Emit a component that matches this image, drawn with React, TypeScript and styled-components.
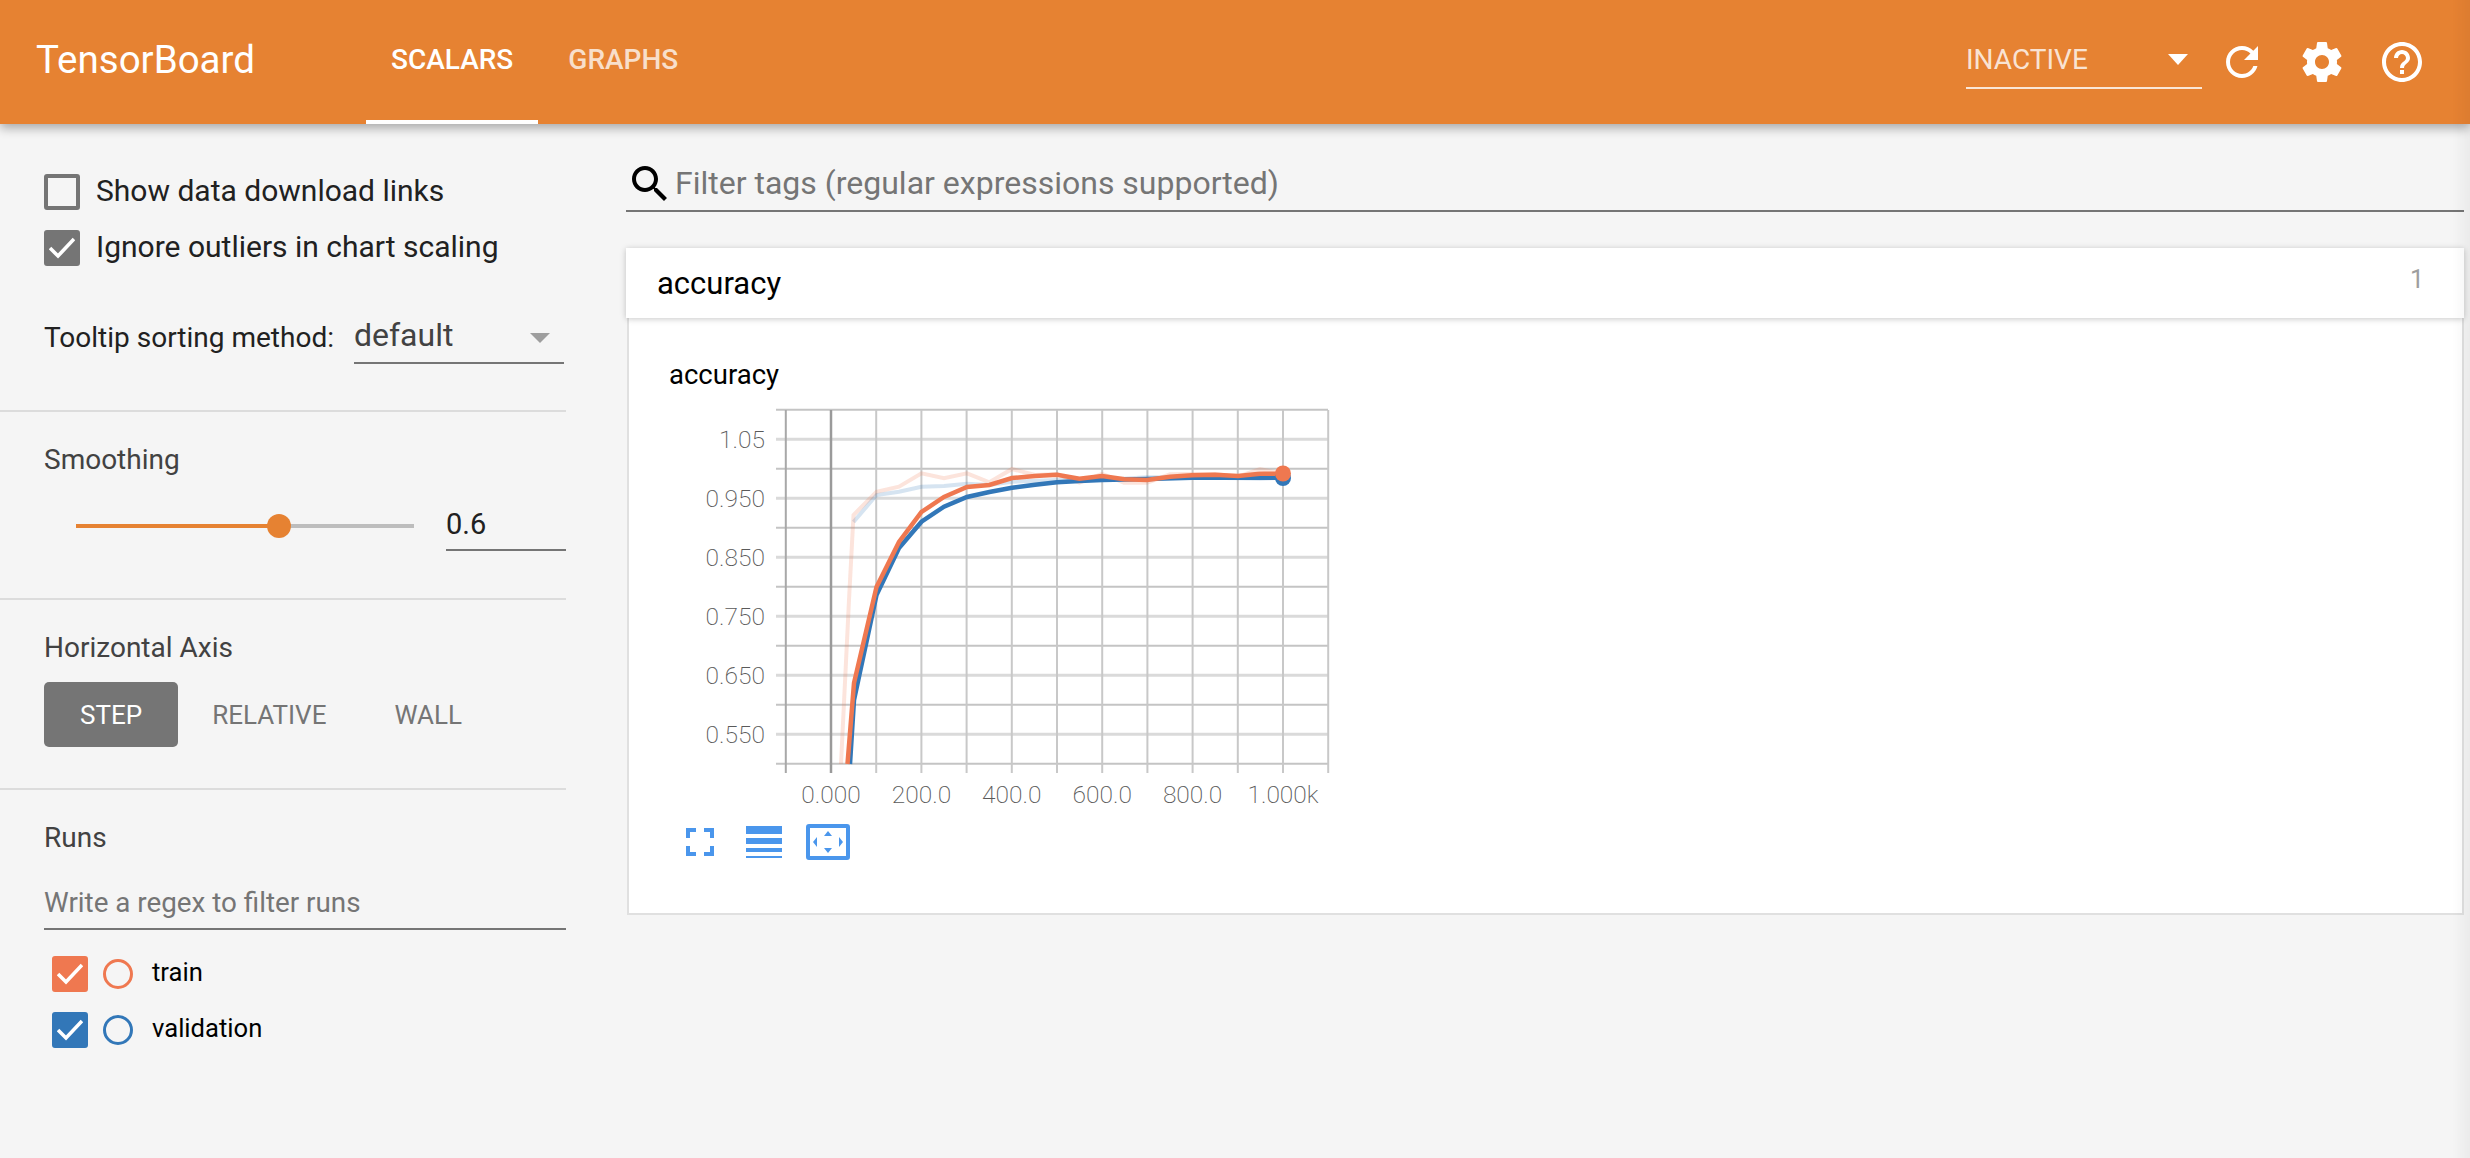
import React from "react";
import styled, { createGlobalStyle } from "styled-components";

const GlobalStyle = createGlobalStyle`
	html, body {
		margin: 0;
		padding: 0;
		background: #f5f5f5;
		font-family: Roboto, "Liberation Sans", sans-serif;
		color: #212121;
	}
	body::after {
		content: "";
		position: fixed;
		top: 0;
		right: 0;
		bottom: 0;
		width: 18px;
		background: linear-gradient(to right, rgba(0, 0, 0, 0), rgba(0, 0, 0, 0.04));
		z-index: 5;
		pointer-events: none;
	}
`;

const Page = styled.div`
	width: 2470px;
	height: 1158px;
	overflow: hidden;
	display: flex;
	flex-direction: column;
`;

const TopBar = styled.header`
	height: 124px;
	flex: none;
	display: flex;
	align-items: stretch;
	background: #e68232;
	color: #fff;
	box-shadow: 0 4px 10px rgba(0, 0, 0, 0.32);
	position: relative;
	z-index: 2;
`;

const Brand = styled.div`
	width: 366px;
	padding-left: 36px;
	box-sizing: border-box;
	font-size: 38.5px;
	line-height: 120px;
`;

const Tab = styled.div<{ $active?: boolean }>`
	padding: 0 25px;
	margin-left: ${(p) => (p.$active ? 0 : 5)}px;
	font-size: 28px;
	font-weight: 500;
	line-height: 120px;
	height: 124px;
	box-sizing: border-box;
	border-bottom: 4px solid ${(p) => (p.$active ? "#fff" : "transparent")};
	opacity: ${(p) => (p.$active ? 1 : 0.75)};
`;

const BarRight = styled.div`
	margin-left: auto;
	display: flex;
	align-items: center;
	padding-right: 28px;
`;

const RunState = styled.div`
	width: 236px;
	height: 60px;
	margin-bottom: 6px;
	box-sizing: border-box;
	border-bottom: 2px solid rgba(255, 255, 255, 0.8);
	display: flex;
	align-items: center;
	justify-content: space-between;
	padding: 2px 14px 0 0;
	font-size: 28px;
	color: rgba(255, 255, 255, 0.8);
`;

const HeaderCaret = styled.span`
	width: 0;
	height: 0;
	border-left: 10px solid transparent;
	border-right: 10px solid transparent;
	border-top: 11px solid #fff;
`;

const IconButton = styled.div`
	width: 80px;
	height: 48px;
	display: flex;
	justify-content: center;
	svg {
		width: 48px;
		height: 48px;
		fill: #fff;
	}
`;

const Body = styled.div`
	flex: 1;
	display: flex;
	min-height: 0;
`;

const Sidebar = styled.aside`
	width: 566px;
	flex: none;
`;

const Section = styled.section<{ $pad?: number; $bottom?: number; $plain?: boolean }>`
	padding: ${(p) => p.$pad ?? 30}px 0 ${(p) => p.$bottom ?? 47}px 44px;
	border-bottom: ${(p) => (p.$plain ? "none" : "2px solid #dcdcdc")};
`;

const CheckRow = styled.label`
	display: flex;
	align-items: center;
	gap: 16px;
	height: 36px;
	margin-bottom: 20px;
	font-size: 30px;
	color: #212121;
`;

const CheckText = styled.span`
	margin-bottom: 3px;
`;

const Box = styled.span<{ $on?: boolean; $color?: string; $size?: number }>`
	width: ${(p) => p.$size ?? 36}px;
	height: ${(p) => p.$size ?? 36}px;
	box-sizing: border-box;
	border-radius: 3px;
	flex: none;
	display: flex;
	align-items: center;
	justify-content: center;
	border: 4px solid ${(p) => p.$color ?? "#757575"};
	background: ${(p) => (p.$on ? p.$color ?? "#757575" : "transparent")};
	svg {
		width: 26px;
		height: 26px;
		fill: none;
		stroke: #fff;
		stroke-width: 3.6;
	}
`;

const SortRow = styled.div`
	display: flex;
	align-items: flex-end;
	gap: 20px;
	margin-top: 50px;
`;

const SortLabel = styled.span`
	font-size: 28px;
	line-height: 32px;
	margin-bottom: 10px;
	color: #212121;
`;

const SortSelect = styled.div`
	width: 210px;
	height: 48px;
	box-sizing: border-box;
	border-bottom: 2px solid #757575;
	display: flex;
	align-items: center;
	justify-content: space-between;
	padding: 0 14px 8px 0;
	font-size: 32px;
	color: #424242;
`;

const SortCaret = styled.span`
	width: 0;
	height: 0;
	margin-top: 6px;
	border-left: 10px solid transparent;
	border-right: 10px solid transparent;
	border-top: 10px solid #9e9e9e;
`;

const SectionTitle = styled.div`
	font-size: 28px;
	line-height: 32px;
	padding-top: 2px;
	color: #424242;
`;

const SliderRow = styled.div`
	display: flex;
	align-items: center;
	gap: 32px;
	height: 52px;
	margin-top: 23px;
	padding-left: 32px;
`;

const Track = styled.div`
	width: 338px;
	height: 4px;
	margin-top: 2px;
	background: #bdbdbd;
	position: relative;
`;

const TrackFill = styled.div`
	height: 100%;
	background: #e68232;
`;

const Thumb = styled.div`
	position: absolute;
	top: -10px;
	width: 24px;
	height: 24px;
	margin-left: -12px;
	border-radius: 50%;
	background: #e68232;
`;

const ValueBox = styled.div`
	width: 120px;
	height: 52px;
	box-sizing: border-box;
	border-bottom: 2px solid #757575;
	font-size: 29px;
	line-height: 50px;
	color: #212121;
`;

const AxisButtons = styled.div`
	display: flex;
	margin-top: 18px;
`;

const AxisButton = styled.div<{ $active?: boolean }>`
	height: 65px;
	padding: 0 ${(p) => (p.$active ? 36 : 34)}px;
	border-radius: 5px;
	font-size: 26px;
	line-height: 67px;
	background: ${(p) => (p.$active ? "#757575" : "transparent")};
	color: ${(p) => (p.$active ? "#fff" : "#757575")};
`;

const RunFilter = styled.div`
	height: 50px;
	margin-top: 26px;
	box-sizing: border-box;
	border-bottom: 2px solid #757575;
	font-size: 27.8px;
	line-height: 46px;
	color: #757575;
`;

const RunList = styled.div`
	margin-top: 26px;
`;

const RunRow = styled.div`
	display: flex;
	align-items: center;
	height: 36px;
	padding-left: 8px;
	margin-bottom: 20px;
	font-size: 25.6px;
	color: #000;
`;

const RunName = styled.span`
	margin-bottom: 5px;
`;

const RunRadio = styled.span<{ $color: string }>`
	width: 30px;
	height: 30px;
	box-sizing: border-box;
	border-radius: 50%;
	border: 3px solid ${(p) => p.$color};
	margin: 0 19px 0 15px;
	flex: none;
`;

const Main = styled.main`
	flex: 1;
	min-width: 0;
	padding: 36px 6px 0 60px;
`;

const SearchRow = styled.div`
	height: 52px;
	box-sizing: border-box;
	border-bottom: 2px solid #757575;
	display: flex;
	gap: 1px;
	font-size: 32px;
	line-height: 46px;
	color: #757575;
	svg {
		width: 48px;
		height: 48px;
		fill: #000;
	}
`;

const CardHeader = styled.div`
	height: 70px;
	margin-top: 36px;
	padding: 0 40px 0 31px;
	background: #fff;
	box-shadow: 0 1px 6px rgba(0, 0, 0, 0.22);
	display: flex;
	justify-content: space-between;
	position: relative;
	font-size: 31px;
	line-height: 72px;
	color: #000;
`;

const CardCount = styled.span`
	font-size: 25px;
	line-height: 64px;
	color: #9e9e9e;
`;

const CardBody = styled.div`
	height: 597px;
	box-sizing: border-box;
	margin-left: 1px;
	padding: 40px 0 0 40px;
	background: #fff;
	border: 2px solid #e0e0e0;
	border-top: none;
`;

const ChartTitle = styled.div`
	font-size: 27.5px;
	line-height: 34px;
	color: #000;
`;

const ChartSvg = styled.svg`
	display: block;
	margin-top: 8px;
	text {
		font-family: Roboto, sans-serif;
		font-weight: 200;
		font-size: 24.5px;
		fill: #5a5a5a;
	}
`;

const ChartTools = styled.div`
	display: flex;
	align-items: center;
	margin-top: 6px;
	height: 40px;
	padding-left: 7px;
	svg {
		display: block;
		fill: #4a96ec;
	}
`;

const CheckMark = () => (
	<svg viewBox="0 0 26 26">
		<path d="M1 13l8 8 16-17" />
	</svg>
);

const xAt = (step: number) => 831 + 0.452 * step;
const yAt = (v: number) => 734.3 - 590 * (v - 0.55);

const toPoints = (pts: number[][]) => pts.map((p) => p.join(",")).join(" ");

const trainSmooth = [
	[847.5, 764], [854, 683], [876.5, 587], [899, 542], [921.5, 512], [944, 497], [967, 487],
	[989.4, 485], [1012, 478], [1035, 476], [1057, 474.7], [1079.4, 478.7], [1102, 476],
	[1124.4, 479.3], [1147, 480], [1170, 476.7], [1192, 475.3], [1215, 474.7], [1238, 476],
	[1260, 473.7], [1283, 473.7],
];
const valSmooth = [
	[850, 764], [854, 700], [876.5, 595], [899, 548], [921.5, 521.7], [944, 506.7], [967, 497],
	[989.4, 492], [1012, 487.7], [1035, 484.7], [1057, 482.3], [1079.4, 481], [1102, 480],
	[1147, 479], [1192, 477.7], [1283, 477.7],
];
const trainRaw = [
	[841, 764], [849, 600], [853.5, 515], [876.5, 491.7], [899, 486.7], [921.5, 473.3], [944, 478.3],
	[967, 473.3], [989.4, 482.3], [1012, 469], [1035, 475], [1057, 474], [1079.4, 482.7], [1102, 474],
	[1124, 482.7], [1147, 482.7], [1170, 474.3], [1192, 474], [1215, 474], [1238, 476.7], [1260, 469],
	[1283, 473.7],
];
const valRaw = [
	[853.5, 522], [876.5, 495], [899, 491.7], [921.5, 486.7], [944, 486],
	[967, 483.7], [989, 485], [1012, 481.7], [1057, 480], [1102, 480], [1147, 477.3], [1192, 477.3],
	[1260, 478.7], [1283, 477.7],
];

const yTicks = [1.1, 1.05, 1.0, 0.95, 0.9, 0.85, 0.8, 0.75, 0.7, 0.65, 0.6, 0.55, 0.5];
const xSteps = [-100, 0, 100, 200, 300, 400, 500, 600, 700, 800, 900, 1000, 1100];
const yLabels = ["1.05", "0.950", "0.850", "0.750", "0.650", "0.550"];
const yLabelValues = [1.05, 0.95, 0.85, 0.75, 0.65, 0.55];
const xLabels = ["0.000", "200.0", "400.0", "600.0", "800.0", "1.000k"];

const Chart = () => (
	<ChartSvg width={680} height={416} viewBox="669 400 680 416">
		{yTicks.map((v, i) => (
			<line
				key={v}
				x1={776}
				x2={1328}
				y1={yAt(v)}
				y2={yAt(v)}
				stroke={i % 2 === 1 ? "#dadada" : "#c4c4c4"}
				strokeWidth={i % 2 === 1 ? 3 : 2}
			/>
		))}
		{xSteps.map((s) => (
			<line
				key={s}
				x1={xAt(s)}
				x2={xAt(s)}
				y1={410}
				y2={773}
				stroke={s === 0 ? "#9a9a9a" : s === -100 ? "#a8a8a8" : "#c8c8c8"}
				strokeWidth={s === 0 ? 2.5 : 2}
			/>
		))}
		<polyline points={toPoints(valRaw)} fill="none" stroke="#3277b8" strokeWidth={4} opacity={0.2} />
		<polyline points={toPoints(trainRaw)} fill="none" stroke="#ef7850" strokeWidth={4} opacity={0.2} />
		<polyline points={toPoints(valSmooth)} fill="none" stroke="#3277b8" strokeWidth={4.5} />
		<polyline points={toPoints(trainSmooth)} fill="none" stroke="#ef7850" strokeWidth={4.5} />
		<circle cx={1283} cy={478} r={8} fill="#3277b8" />
		<circle cx={1283} cy={473.5} r={8} fill="#ef7850" />
		{yLabels.map((t, i) => (
			<text key={t} x={765} y={yAt(yLabelValues[i]) + 8.5} textAnchor="end">
				{t}
			</text>
		))}
		{xLabels.map((t, i) => (
			<text key={t} x={xAt(i * 200)} y={803} textAnchor="middle">
				{t}
			</text>
		))}
	</ChartSvg>
);

const Sidebar_ = () => (
	<Sidebar>
		<Section $pad={50} $bottom={46}>
			<CheckRow>
				<Box />
				<CheckText>Show data download links</CheckText>
			</CheckRow>
			<CheckRow>
				<Box $on>
					<CheckMark />
				</Box>
				<CheckText>Ignore outliers in chart scaling</CheckText>
			</CheckRow>
			<SortRow>
				<SortLabel>Tooltip sorting method:</SortLabel>
				<SortSelect>
					default
					<SortCaret />
				</SortSelect>
			</SortRow>
		</Section>
		<Section>
			<SectionTitle>Smoothing</SectionTitle>
			<SliderRow>
				<Track>
					<TrackFill style={{ width: "60%" }} />
					<Thumb style={{ left: "60%" }} />
				</Track>
				<ValueBox>0.6</ValueBox>
			</SliderRow>
		</Section>
		<Section $bottom={41}>
			<SectionTitle>Horizontal Axis</SectionTitle>
			<AxisButtons>
				<AxisButton $active>STEP</AxisButton>
				<AxisButton>RELATIVE</AxisButton>
				<AxisButton>WALL</AxisButton>
			</AxisButtons>
		</Section>
		<Section $plain $bottom={0}>
			<SectionTitle>Runs</SectionTitle>
			<RunFilter>Write a regex to filter runs</RunFilter>
			<RunList>
				<RunRow>
					<Box $on $color="#ef7850">
						<CheckMark />
					</Box>
					<RunRadio $color="#ef7850" />
					<RunName>train</RunName>
				</RunRow>
				<RunRow>
					<Box $on $color="#3277b8">
						<CheckMark />
					</Box>
					<RunRadio $color="#3277b8" />
					<RunName>validation</RunName>
				</RunRow>
			</RunList>
		</Section>
	</Sidebar>
);

export default function App() {
	return (
		<Page>
			<GlobalStyle />
			<TopBar>
				<Brand>TensorBoard</Brand>
				<Tab $active>SCALARS</Tab>
				<Tab>GRAPHS</Tab>
				<BarRight>
					<RunState>
						INACTIVE
						<HeaderCaret />
					</RunState>
					<IconButton>
						<svg viewBox="0 0 24 24">
							<path d="M17.65 6.35C16.2 4.9 14.21 4 12 4c-4.42 0-7.99 3.58-7.99 8s3.57 8 7.99 8c3.73 0 6.84-2.55 7.73-6h-2.08c-.82 2.33-3.04 4-5.65 4-3.31 0-6-2.69-6-6s2.69-6 6-6c1.66 0 3.14.69 4.22 1.78L13 11h7V4l-2.35 2.35z" />
						</svg>
					</IconButton>
					<IconButton>
						<svg viewBox="0 0 24 24">
							<path d="M19.43 12.98c.04-.32.07-.64.07-.98s-.03-.66-.07-.98l2.11-1.65c.19-.15.24-.42.12-.64l-2-3.46c-.12-.22-.39-.3-.61-.22l-2.49 1c-.52-.4-1.08-.73-1.69-.98l-.38-2.65C14.46 2.18 14.25 2 14 2h-4c-.25 0-.46.18-.49.42l-.38 2.65c-.61.25-1.17.59-1.69.98l-2.49-1c-.23-.09-.49 0-.61.22l-2 3.46c-.13.22-.07.49.12.64l2.11 1.65c-.04.32-.07.65-.07.98s.03.66.07.98l-2.11 1.65c-.19.15-.24.42-.12.64l2 3.46c.12.22.39.3.61.22l2.49-1c.52.4 1.08.73 1.69.98l.38 2.65c.03.24.24.42.49.42h4c.25 0 .46-.18.49-.42l.38-2.65c.61-.25 1.17-.59 1.69-.98l2.49 1c.23.09.49 0 .61-.22l2-3.46c.12-.22.07-.49-.12-.64l-2.11-1.65zM12 15.5c-1.93 0-3.5-1.57-3.5-3.5s1.57-3.5 3.5-3.5 3.5 1.57 3.5 3.5-1.57 3.5-3.5 3.5z" />
						</svg>
					</IconButton>
					<IconButton>
						<svg viewBox="0 0 24 24">
							<path d="M11 18h2v-2h-2v2zm1-16C6.48 2 2 6.48 2 12s4.48 10 10 10 10-4.48 10-10S17.52 2 12 2zm0 18c-4.41 0-8-3.59-8-8s3.59-8 8-8 8 3.59 8 8-3.59 8-8 8zm0-14c-2.21 0-4 1.79-4 4h2c0-1.1.9-2 2-2s2 .9 2 2c0 2-3 1.75-3 5h2c0-2.25 3-2.5 3-5 0-2.21-1.79-4-4-4z" />
						</svg>
					</IconButton>
				</BarRight>
			</TopBar>
			<Body>
				<Sidebar_ />
				<Main>
					<SearchRow>
						<svg viewBox="0 0 24 24">
							<path d="M15.5 14h-.79l-.28-.27C15.41 12.59 16 11.11 16 9.5 16 5.91 13.09 3 9.5 3S3 5.91 3 9.5 5.91 16 9.5 16c1.61 0 3.09-.59 4.23-1.57l.27.28v.79l5 4.99L20.49 19l-4.99-5zm-6 0C7.01 14 5 11.99 5 9.5S7.01 5 9.5 5 14 7.01 14 9.5 11.99 14 9.5 14z" />
						</svg>
						Filter tags (regular expressions supported)
					</SearchRow>
					<CardHeader>
						accuracy
						<CardCount>1</CardCount>
					</CardHeader>
					<CardBody>
						<ChartTitle>accuracy</ChartTitle>
						<Chart />
						<ChartTools>
							<svg width={48} height={48} viewBox="0 0 24 24">
								<path d="M7 14H5v5h5v-2H7v-3zm-2-4h2V7h3V5H5v5zm12 7h-3v2h5v-5h-2v3zM14 5v2h3v3h2V5h-5z" />
							</svg>
							<svg width={36} height={32} viewBox="0 0 36 32" style={{ marginLeft: 22 }}>
								<path d="M0 0h36v8H0zM0 12h36v6H0zM0 22h36v4H0zM0 30h36v2H0z" />
							</svg>
							<svg width={44} height={36} viewBox="0 0 44 36" style={{ marginLeft: 24 }}>
								<path
									fillRule="evenodd"
									d="M3 0h38a3 3 0 0 1 3 3v30a3 3 0 0 1-3 3H3a3 3 0 0 1-3-3V3a3 3 0 0 1 3-3zM4 4v28h36V4zM22 7l4 5h-8zM22 29l-4-5h8zM7 18l4-5v10zM37 18l-4 5V13z"
								/>
							</svg>
						</ChartTools>
					</CardBody>
				</Main>
			</Body>
		</Page>
	);
}
